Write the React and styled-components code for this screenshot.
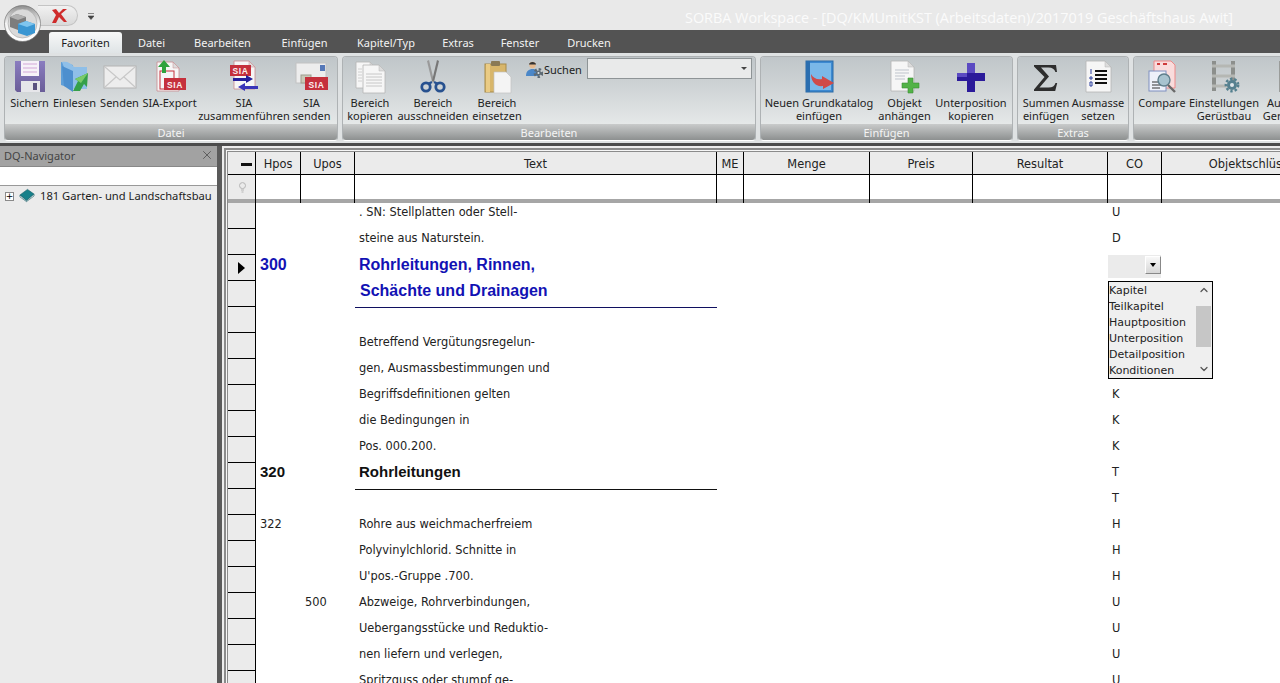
import React from 'react';
import styled, { createGlobalStyle } from 'styled-components';
import { ChevronUp, ChevronDown, X } from 'lucide-react';

const GRID_FONT = '"DejaVu Sans", Tahoma, sans-serif';
const RIBBON_FONT = '"Noto Sans", Tahoma, sans-serif';
const COLUMNS = '28px 45px 54px 362px 27px 126px 103px 135px 54px 184px';

const GlobalStyle = createGlobalStyle`
  html, body {
    margin: 0;
    height: 100%;
    overflow: hidden;
    background: #fff;
  }
  #root {
    height: 100%;
  }
`;

const Page = styled.div`
  position: relative;
  display: flex;
  flex-direction: column;
  height: 100%;
  overflow: hidden;
  font-family: ${RIBBON_FONT};
  font-size: 11px;
  color: #1c1c1c;
`;

/* title + tabs */
const TitleBar = styled.div`
  flex: none;
  display: flex;
  align-items: center;
  height: 30px;
  background: #e9e9e9;
`;

const QuickAccess = styled.div`
  display: flex;
  align-items: center;
  justify-content: flex-end;
  align-self: flex-start;
  box-sizing: border-box;
  width: 40px;
  height: 21px;
  margin: 5px 0 0 38px;
  padding-right: 9px;
  border: 1px solid #c4c4c4;
  border-left: 0;
  border-radius: 0 11px 11px 0;
  background: linear-gradient(#f1f1f1, #d9d9d9);
`;

const QuickMenu = styled.svg`
  flex: none;
  width: 6px;
  height: 7px;
  margin: 0 0 0 10px;
  position: relative;
  top: 1px;
`;

const TitleText = styled.div`
  margin: 4px 0 0 591px;
  color: #fbfbfb;
  font-family: "Open Sans", sans-serif;
  font-size: 14.4px;
  white-space: nowrap;
`;

const Orb = styled.div`
  position: absolute;
  left: 4px;
  top: 5px;
  width: 37px;
  height: 37px;
  z-index: 2;
`;

const TabBar = styled.div`
  flex: none;
  display: flex;
  align-items: flex-end;
  height: 23px;
  padding-left: 49px;
  background: #535353;
`;

const Tab = styled.div`
  display: flex;
  align-items: center;
  justify-content: center;
  box-sizing: border-box;
  width: ${(p) => p.$w}px;
  height: 21px;
  margin-right: ${(p) => p.$gap || 0}px;
  color: ${(p) => (p.$active ? '#1b1b1b' : '#f2f2f2')};
  background: ${(p) => (p.$active ? 'linear-gradient(#f7f8f8, #dfe4e6)' : 'none')};
  border-radius: 3px 3px 0 0;
  white-space: nowrap;
`;

/* ribbon */
const Ribbon = styled.div`
  flex: none;
  display: flex;
  gap: 4px;
  box-sizing: border-box;
  height: 90px;
  padding: 3px 0 2px 4px;
  background: #dfe2e3;
  overflow: hidden;
`;

const Group = styled.div`
  flex: none;
  display: flex;
  flex-direction: column;
  box-sizing: border-box;
  width: ${(p) => p.$w}px;
  border: 1px solid #aeb2b4;
  border-bottom-color: #fff;
  border-radius: 4px;
  overflow: hidden;
`;

const GroupBody = styled.div`
  flex: 1;
  display: flex;
  padding: 3px 0 0 3px;
  background: linear-gradient(#c0c6c9, #cdd2d4 40%, #e5e8e8);
`;

const GroupFooter = styled.div`
  flex: none;
  height: 16px;
  color: #f4f4f4;
  line-height: 18px;
  text-align: center;
  background: linear-gradient(#c9cbcb, #8d9090);
`;

const Item = styled.div`
  flex: none;
  display: flex;
  flex-direction: column;
  align-items: center;
  width: ${(p) => p.$w}px;
  white-space: nowrap;
  svg {
    display: block;
    width: 34px;
    height: 34px;
  }
`;

const ItemLabel = styled.div`
  margin-top: 2px;
  color: #222;
  line-height: 13px;
  text-align: center;
  white-space: pre;
`;

const SearchBox = styled.div`
  display: flex;
  align-items: flex-start;
  margin-left: 4px;
  svg {
    flex: none;
    width: 17px;
    height: 17px;
    margin-top: 1px;
  }
`;

const SearchLabel = styled.span`
  width: 43px;
  margin: 2px 0 0 1px;
`;

const Combo = styled.div`
  position: relative;
  box-sizing: border-box;
  width: 165px;
  height: 21px;
  margin-top: -2px;
  border: 1px solid #8e9496;
  background: #e9eaea;
  &::after {
    content: '';
    position: absolute;
    right: 4px;
    top: 8px;
    border: 3px solid transparent;
    border-top: 3px solid #444;
  }
`;

const DarkStrip = styled.div`
  flex: none;
  height: 3px;
  background: #4c4c4c;
`;

/* body */
const Workspace = styled.div`
  flex: 1;
  display: flex;
  min-height: 0;
`;

const Navigator = styled.div`
  flex: none;
  display: flex;
  flex-direction: column;
  width: 217px;
  background: #ebebeb;
`;

const NavHeader = styled.div`
  flex: none;
  display: flex;
  align-items: center;
  justify-content: space-between;
  box-sizing: border-box;
  height: 21px;
  padding: 0 3px 2px 4px;
  color: #444;
  background: #a2a2a2;
  border-bottom: 1px solid #888;
`;

const NavSearch = styled.div`
  flex: none;
  height: 18px;
  background: #fff;
  border-bottom: 1px solid #999;
`;

const TreeRow = styled.div`
  display: flex;
  align-items: center;
  height: 19px;
  padding-left: 5px;
  font-size: 11.2px;
  white-space: nowrap;
  svg {
    flex: none;
  }
`;

const Expander = styled.div`
  flex: none;
  display: flex;
  align-items: center;
  justify-content: center;
  box-sizing: border-box;
  width: 9px;
  height: 9px;
  margin: 2px 5px 0 0;
  border: 1px solid #8a8a8a;
  background: #fff;
  font-family: ${GRID_FONT};
  font-size: 9px;
  line-height: 1;
  color: #000;
`;

const TreeLabel = styled.span`
  margin-left: 5px;
  padding-bottom: 1px;
`;

const Splitter = styled.div`
  flex: none;
  width: 5px;
  background: #5a5a5a;
`;

const GridFrame = styled.div`
  flex: 1;
  min-width: 0;
  padding: 2px 0 0 2px;
  background: #ececec;
`;

const GridBorder = styled.div`
  box-sizing: border-box;
  height: 100%;
  padding: 1px 0 0 1px;
  border: solid #8b8b8b;
  border-width: 2px 0 0 2px;
  background: #f6f6f6;
`;

const GridClip = styled.div`
  position: relative;
  height: 100%;
  border: solid #8b8b8b;
  border-width: 1px 0 0 1px;
  background: #fff;
  overflow: hidden;
  font-family: ${GRID_FONT};
  font-size: 11.4px;
`;

const HeaderRow = styled.div`
  display: grid;
  grid-template-columns: ${COLUMNS};
  height: 23px;
  width: 1118px;
`;

const HeaderCell = styled.div`
  box-sizing: border-box;
  height: 23px;
  border-right: 1px solid #000;
  border-bottom: 1px solid #000;
  background: #ebebeb;
  color: #222;
  line-height: 24px;
  text-align: center;
  white-space: nowrap;
`;

const CornerMark = styled.div`
  width: 11px;
  height: 3px;
  margin: 11px 3px 0 auto;
  background: #111;
`;

const FilterRow = styled.div`
  display: grid;
  grid-template-columns: ${COLUMNS};
  height: 28px;
  width: 1118px;
`;

const FilterCell = styled.div`
  box-sizing: border-box;
  border-right: 1px solid #000;
  background: linear-gradient(
    ${(p) => (p.$corner ? '#ebebeb' : '#fff')} 24px,
    #a6a6a6 24px
  );
  svg {
    display: block;
    margin: 7px 0 0 10px;
  }
`;

const DataRow = styled.div`
  display: grid;
  grid-template-columns: ${COLUMNS};
  height: 26px;
  width: 1118px;
`;

const Selector = styled.div`
  display: flex;
  align-items: center;
  justify-content: center;
  box-sizing: border-box;
  height: 26px;
  padding-left: 1px;
  border-right: 1px solid #000;
  border-bottom: 1px solid #000;
  background: #ebebeb;
`;

const Arrow = styled.div`
  width: 0;
  height: 0;
  margin-right: 2px;
  border: 6px solid transparent;
  border-left: 7px solid #000;
  border-right: 0;
`;

const Cell = styled.div`
  box-sizing: border-box;
  padding: ${(p) => (p.$bold ? 1 : 0)}px 0 0 ${(p) => p.$pad || 4}px;
  color: ${(p) => p.$color || '#222'};
  font-family: ${(p) => (p.$bold ? '"Liberation Sans", Arial, sans-serif' : 'inherit')};
  font-size: ${(p) => p.$size || 11.4}px;
  font-weight: ${(p) => (p.$bold ? 700 : 400)};
  line-height: ${(p) => (p.$size === 15 ? 16 : 18)}px;
  white-space: nowrap;
`;

const TextCell = styled(Cell)`
  box-shadow: ${(p) => (p.$rule ? `0 1px 0 ${p.$rule}` : 'none')};
  height: 26px;
`;

const InlineCombo = styled.div`
  position: absolute;
  left: 880px;
  top: 103px;
  box-sizing: border-box;
  width: 53px;
  height: 23px;
  background: #ebebeb;
`;

const ComboButton = styled.div`
  position: absolute;
  right: 0;
  top: 1px;
  box-sizing: border-box;
  width: 16px;
  height: 18px;
  background: linear-gradient(#f8f8f8, #d6d6d6);
  border: 1px solid #fff;
  border-right-color: #888;
  border-bottom-color: #888;
  &::after {
    content: '';
    position: absolute;
    left: 4px;
    top: 6px;
    border: 3px solid transparent;
    border-top: 4px solid #000;
  }
`;

const ListBox = styled.div`
  position: absolute;
  left: 880px;
  top: 129px;
  display: flex;
  box-sizing: border-box;
  width: 105px;
  height: 98px;
  border: 1px solid #000;
  background: #efefef;
  font-size: 11px;
`;

const ListItems = styled.div`
  flex: 1;
  padding-top: 1px;
`;

const ListItem = styled.div`
  height: 16px;
  color: #222;
  line-height: 16px;
  white-space: nowrap;
`;

const ScrollBar = styled.div`
  flex: none;
  display: flex;
  flex-direction: column;
  align-items: center;
  justify-content: flex-start;
  width: 15px;
  margin-right: 1px;
  padding: 2px 0;
  box-sizing: border-box;
  color: #555;
  svg {
    flex: none;
  }
`;

const ScrollThumb = styled.div`
  flex: none;
  align-self: stretch;
  height: 41px;
  margin: 10px 0 16px;
  background: #c6c6c6;
`;

/* drawn icons */
function Gear({ x, y, r, color }) {
  return (
    <g>
      <circle cx={x} cy={y} r={r} fill={color} />
      <circle cx={x} cy={y} r={r + 1.2} fill="none" stroke={color} strokeWidth="2.4" strokeDasharray="2.4 2" />
      <circle cx={x} cy={y} r={r * 0.4} fill="#dfe6ea" />
    </g>
  );
}

function Sheet({ x = 6, y = 1, w = 20, h = 28, fill = '#f6f6f6', edge = '#b5b5b5' }) {
  return (
    <g>
      <path
        d={`M${x} ${y}h${w - 6}l6 6v${h - 6}h-${w}z`}
        fill={fill}
        stroke={edge}
        strokeWidth="0.8"
      />
      <path d={`M${x + w - 6} ${y}v6h6z`} fill="#dcdcdc" stroke={edge} strokeWidth="0.5" />
    </g>
  );
}

function SiaTag({ x, y, w = 20, h = 11 }) {
  return (
    <g>
      <rect x={x} y={y} width={w} height={h} fill="#c5303c" />
      <text
        x={x + w / 2}
        y={y + h - 2.2}
        textAnchor="middle"
        fontFamily="Liberation Sans, sans-serif"
        fontWeight="700"
        fontSize="8.5"
        letterSpacing="0.6"
        fill="#fbeeee"
      >
        SIA
      </text>
    </g>
  );
}

const icons = {
  save: (
    <svg viewBox="0 0 34 34">
      <defs>
        <linearGradient id="fl" x1="0" y1="0" x2="0" y2="1">
          <stop offset="0" stopColor="#8a7dc0" />
          <stop offset="1" stopColor="#6a5d98" />
        </linearGradient>
      </defs>
      <path d="M2 1h30v31H4l-2-2z" fill="url(#fl)" />
      <rect x="8" y="1" width="18" height="15" fill="#f6f2f8" />
      <path d="M10 4h14M10 8h14M10 12h14" stroke="#d3a8d8" strokeWidth="1" />
      <rect x="8" y="21" width="19" height="11" fill="#e6e6ea" />
      <rect x="20" y="23" width="4" height="7" fill="#5a5280" />
    </svg>
  ),
  load: (
    <svg viewBox="0 0 34 34">
      <path d="M3 2l12 3v24l-12-4z" fill="#5f9fd8" />
      <path d="M4 2c5-1 9 1 12 5h13v22H14z" fill="#8fbfe8" />
      <path d="M4 6l11 5v21L6 26z" fill="#4d8fce" />
      <path d="M15 31l5-10-3-2 13-6-1 14-3-3-4 7z" fill="#35a04a" />
      <path d="M20 21l-3-2 13-6-7 10z" fill="#7acb6a" />
    </svg>
  ),
  mail: (
    <svg viewBox="0 0 34 34">
      <rect x="1" y="6" width="32" height="22" fill="#ededed" stroke="#b3b3b3" />
      <path d="M2 7l15 13L32 7M2 27l11-10M32 27L21 17" fill="none" stroke="#c8c8c8" strokeWidth="1.2" />
    </svg>
  ),
  export: (
    <svg viewBox="0 0 34 34">
      <Sheet x={4} y={2} w={22} h={29} edge="#c98a8f" />
      <rect x="7" y="11" width="14" height="18" fill="none" stroke="#c5303c" strokeWidth="1" />
      <SiaTag x={11} y={18} w={22} h={12} />
      <path d="M9 13V7H5l6-7 6 7h-4v6z" fill="#2fa33d" />
    </svg>
  ),
  merge: (
    <svg viewBox="0 0 34 34">
      <Sheet x={7} y={1} w={21} h={28} edge="#c98a8f" />
      <SiaTag x={3} y={5} w={21} h={11} />
      <path d="M6 18h13v-3l7 4-7 4v-2H6z" fill="#26209a" />
      <path d="M31 26H18v-3l-7 4 7 4v-2h13z" fill="#3a34b8" />
    </svg>
  ),
  siaSend: (
    <svg viewBox="0 0 34 34">
      <rect x="1" y="3" width="30" height="20" fill="#ededed" stroke="#c2c2c2" />
      <rect x="25" y="5" width="5" height="6" fill="#5578b8" />
      <rect x="6" y="15" width="10" height="8" fill="#c9c9b8" stroke="#9d9d90" />
      <SiaTag x={10} y={17} w={23} h={13} />
    </svg>
  ),
  copy: (
    <svg viewBox="0 0 34 34">
      <Sheet x={3} y={2} w={20} h={26} />
      <Sheet x={10} y={5} w={22} h={28} />
      <path d="M13 14h16M13 17h16M13 20h16M13 23h16M13 26h16" stroke="#bdbdbd" strokeWidth="0.8" />
      <path d="M5 9h4M5 12h4M5 15h4M5 18h4M5 21h4" stroke="#c7c7c7" strokeWidth="0.8" />
    </svg>
  ),
  cut: (
    <svg viewBox="0 0 34 34">
      <path d="M13 0l5 21-2 1-5-21z" fill="#9a9a9a" />
      <path d="M21 0l-5 21 2 1 5-21z" fill="#777" />
      <circle cx="10" cy="27" r="4.2" fill="none" stroke="#27518f" strokeWidth="2.8" />
      <circle cx="24" cy="27" r="4.2" fill="none" stroke="#27518f" strokeWidth="2.8" />
      <path d="M16 22l-4 2M18 22l4 2" stroke="#27518f" strokeWidth="2.4" />
    </svg>
  ),
  paste: (
    <svg viewBox="0 0 34 34">
      <rect x="5" y="4" width="21" height="28" fill="#d8b66a" stroke="#a88b4b" />
      <rect x="6" y="4" width="4" height="28" fill="#eacb84" />
      <rect x="11" y="1" width="9" height="5" rx="1" fill="#8a7a55" />
      <path d="M14 12h12l5 5v16H14z" fill="#f4f4f4" stroke="#c2c2c2" strokeWidth="0.7" />
    </svg>
  ),
  user: (
    <svg viewBox="0 0 17 17">
      <circle cx="6.5" cy="4" r="3.2" fill="#e6b98d" />
      <path d="M3 3.5C3 0 10 0 10 3.5z" fill="#333" />
      <path d="M0 15c0-5 3-7 6.5-7S13 10 13 15z" fill="#4b87c8" />
      <Gear x={12.5} y={12} r={2.6} color="#5d6a74" />
    </svg>
  ),
  catalog: (
    <svg viewBox="0 0 34 34">
      <rect x="4" y="1" width="27" height="31" fill="#3d8ad2" stroke="#2b6aa6" />
      <rect x="4" y="1" width="4" height="31" fill="#2a6eb0" />
      <rect x="8" y="3" width="21" height="27" fill="#7ab8e8" />
      <path d="M9 14c2 4 6 6 11 5v-3l12 7-11 6v-3c-7 1-12-4-12-12z" fill="#cf4a48" />
    </svg>
  ),
  attach: (
    <svg viewBox="0 0 34 34">
      <Sheet x={3} y={1} w={23} h={30} />
      <path d="M7 10h14M7 13h14M7 16h10M7 19h10" stroke="#bfc4cc" strokeWidth="1" />
      <path d="M20 18h5v5h6v5h-6v5h-5v-5h-6v-5h6z" fill="#52b347" stroke="#3d8d35" strokeWidth="0.6" />
    </svg>
  ),
  plus: (
    <svg viewBox="0 0 34 34">
      <path d="M13 3h8v10h10v8H21v11h-8V21H3v-8h10z" fill="#2b1a9a" />
      <path d="M13 3h8v10h-8zM3 13h10v4H3z" fill="#5b4ac2" />
    </svg>
  ),
  sigma: (
    <svg viewBox="0 0 34 34">
      <path
        d="M5 5h22l1 7h-1.600c-1-3-3-4.500-7-4.500h-7.400l8 9-9.500 11h9c4 0 6-1.500 7-4.500h1.700l-2 8H5v-1.500l10.500-12.500L5 6.500z"
        fill="#2e2e2e"
      />
    </svg>
  ),
  list: (
    <svg viewBox="0 0 34 34">
      <Sheet x={5} y={1} w={25} h={31} />
      <path d="M14 11h12M14 15h12M14 19h12M14 23h12" stroke="#111" strokeWidth="2" />
      <path d="M10 9v5M9 17h2v2H9zM9 22h2v4H9z" stroke="#2a3f9e" strokeWidth="1" fill="none" />
    </svg>
  ),
  compare: (
    <svg viewBox="0 0 34 34">
      <path d="M9 1h17l4 4v23H9z" fill="#f9dcdc" stroke="#ee8a8a" />
      <path d="M12 4h3M18 4h4" stroke="#cf3a3a" strokeWidth="2" />
      <rect x="4" y="11" width="17" height="20" fill="#eef1fa" stroke="#7f8fc0" />
      <path d="M7 22h11M7 25h11M7 28h8" stroke="#333" strokeWidth="1" />
      <circle cx="19" cy="20" r="6" fill="#a8c3cf" stroke="#5f7f8c" strokeWidth="1.4" />
      <path d="M23 25l7 7" stroke="#6a6a6a" strokeWidth="2.4" />
    </svg>
  ),
  scaffold: (
    <svg viewBox="0 0 34 34">
      <rect x="5" y="1" width="4" height="30" fill="#8c8f8c" />
      <rect x="24" y="1" width="4" height="24" fill="#8c8f8c" />
      <path d="M5 6h23M5 16h23M5 26h16" stroke="#b5b7b3" strokeWidth="3" />
      <Gear x={25} y={25} r={5} color="#55808f" />
    </svg>
  ),
  blank: (
    <svg viewBox="0 0 34 34">
      <rect x="6" y="1" width="5" height="31" fill="#9a9c9a" />
      <rect x="14" y="6" width="20" height="20" fill="#c7c9c7" />
    </svg>
  ),
};

function OrbIcon() {
  return (
    <svg viewBox="0 0 37 37" width="37" height="37">
      <defs>
        <linearGradient id="ring" x1="0" y1="0" x2="0" y2="1">
          <stop offset="0" stopColor="#8f8f8f" />
          <stop offset="0.5" stopColor="#f4f4f4" />
          <stop offset="1" stopColor="#ffffff" />
        </linearGradient>
      </defs>
      <circle cx="18.5" cy="18.5" r="18" fill="url(#ring)" stroke="#666" strokeWidth="0.6" />
      <circle cx="18.500" cy="18.500" r="14.500" fill="#dadada" stroke="#a5a5a5" strokeWidth="0.6" />
      <path d="M6 12l7-3 9 3v10l-8 3-8-3z" fill="#7d7d7d" />
      <path d="M6 12l7-3 9 3-8 3z" fill="#b1b1b1" />
      <path d="M14 19l8-3 9 3v9l-8 3-9-3z" fill="#3a96d2" />
      <path d="M14 19l8-3 9 3-8 3z" fill="#7fc5ee" />
    </svg>
  );
}

function CloseMark() {
  return (
    <svg viewBox="0 0 18 16" width="18" height="16">
      <path d="M2 2l4 5-4 8h4l3-6 5 5h3l-6-8 6-5h-4l-4 4-3-4z" fill="#cf2b2b" />
    </svg>
  );
}

function BookIcon() {
  return (
    <svg viewBox="0 0 17 15" width="16" height="15">
      <path d="M1 7l8-6 7 5-8 7z" fill="#17808a" stroke="#0d5560" strokeWidth="0.6" />
      <path d="M1 7v2l7 5 8-6V6l-8 7z" fill="#e6eeee" stroke="#0d5560" strokeWidth="0.6" />
    </svg>
  );
}

function BulbIcon() {
  return (
    <svg viewBox="0 0 9 11" width="9" height="11">
      <circle cx="4.5" cy="3.6" r="3" fill="none" stroke="#b5b5b5" />
      <path d="M3 8h3M3.5 10h2" stroke="#b5b5b5" />
    </svg>
  );
}

const TABS = [
  ['Favoriten', 73, 2, true],
  ['Datei', 55, 0],
  ['Bearbeiten', 87, 0],
  ['Einfügen', 77, 0],
  ['Kapitel/Typ', 86, 0],
  ['Extras', 58, 0],
  ['Fenster', 66, 0],
  ['Drucken', 72, 0],
];

const GROUPS = [
  {
    title: 'Datei',
    w: 334,
    items: [
      ['save', 'Sichern', 43],
      ['load', 'Einlesen', 47],
      ['mail', 'Senden', 43],
      ['export', 'SIA-Export', 57],
      ['merge', 'SIA\nzusammenführen', 92],
      ['siaSend', 'SIA\nsenden', 43],
    ],
  },
  {
    title: 'Bearbeiten',
    w: 414,
    search: true,
    items: [
      ['copy', 'Bereich\nkopieren', 48],
      ['cut', 'Bereich\nausschneiden', 78],
      ['paste', 'Bereich\neinsetzen', 50],
    ],
  },
  {
    title: 'Einfügen',
    w: 253,
    items: [
      ['catalog', 'Neuen Grundkatalog\neinfügen', 110],
      ['attach', 'Objekt\nanhängen', 61],
      ['plus', 'Unterposition\nkopieren', 72],
    ],
  },
  {
    title: 'Extras',
    w: 112,
    items: [
      ['sigma', 'Summen\neinfügen', 50],
      ['list', 'Ausmasse\nsetzen', 54],
    ],
  },
  {
    title: '',
    w: 300,
    items: [
      ['compare', 'Compare', 50],
      ['scaffold', 'Einstellungen\nGerüstbau', 74],
      ['blank', 'Ausmass\nGerüstbau', 58],
    ],
  },
];

const HEADERS = ['Hpos', 'Upos', 'Text', 'ME', 'Menge', 'Preis', 'Resultat', 'CO', 'Objektschlüssel'];

const BLUE = '#1212b4';

const ROWS = [
  { text: '. SN: Stellplatten oder Stell-', co: 'U' },
  { text: 'steine aus Naturstein.', co: 'D' },
  { hpos: '300', text: 'Rohrleitungen, Rinnen,', color: BLUE, size: 16, bold: true, current: true },
  { text: 'Schächte und Drainagen', color: BLUE, size: 16, bold: true, rule: '#101060', nudge: 5 },
  {},
  { text: 'Betreffend Vergütungsregelun-' },
  { text: 'gen, Ausmassbestimmungen und' },
  { text: 'Begriffsdefinitionen gelten', co: 'K' },
  { text: 'die Bedingungen in', co: 'K' },
  { text: 'Pos. 000.200.', co: 'K' },
  { hpos: '320', text: 'Rohrleitungen', color: '#111', size: 15, bold: true, rule: '#111', co: 'T' },
  { co: 'T' },
  { hpos: '322', text: 'Rohre aus weichmacherfreiem', co: 'H' },
  { text: 'Polyvinylchlorid. Schnitte in', co: 'H' },
  { text: "U'pos.-Gruppe .700.", co: 'H' },
  { upos: '500', text: 'Abzweige, Rohrverbindungen,', co: 'U' },
  { text: 'Uebergangsstücke und Reduktio-', co: 'U' },
  { text: 'nen liefern und verlegen,', co: 'U' },
  { text: 'Spritzguss oder stumpf ge-', co: 'U' },
];

const CO_OPTIONS = ['Kapitel', 'Teilkapitel', 'Hauptposition', 'Unterposition', 'Detailposition', 'Konditionen'];

function RibbonGroup({ group }) {
  return (
    <Group $w={group.w}>
      <GroupBody>
        {group.items.map(([icon, label, w]) => (
          <Item key={label} $w={w}>
            {icons[icon]}
            <ItemLabel>{label}</ItemLabel>
          </Item>
        ))}
        {group.search && (
          <SearchBox>
            {icons.user}
            <SearchLabel>Suchen</SearchLabel>
            <Combo />
          </SearchBox>
        )}
      </GroupBody>
      <GroupFooter>{group.title}</GroupFooter>
    </Group>
  );
}

function Row({ row }) {
  return (
    <DataRow>
      <Selector>{row.current && <Arrow />}</Selector>
      <Cell $color={row.color} $size={row.size} $bold={row.bold}>
        {row.hpos}
      </Cell>
      <Cell>{row.upos}</Cell>
      <TextCell
        $color={row.color}
        $size={row.size}
        $bold={row.bold}
        $rule={row.rule}
        $pad={row.nudge || 4}
      >
        {row.text}
      </TextCell>
      <div />
      <div />
      <div />
      <div />
      <Cell>{row.co}</Cell>
      <div />
    </DataRow>
  );
}

export default function App() {
  return (
    <Page>
      <GlobalStyle />
      <TitleBar>
        <QuickAccess>
          <CloseMark />
        </QuickAccess>
        <QuickMenu viewBox="0 0 6 7">
          <path d="M0 0.500h6M0 3h6l-3 3.500z" fill="#444" stroke="#444" strokeWidth="0.6" />
        </QuickMenu>
        <TitleText>SORBA Workspace - [DQ/KMUmitKST (Arbeitsdaten)/2017019 Geschäftshaus Awit]</TitleText>
      </TitleBar>
      <Orb>
        <OrbIcon />
      </Orb>
      <TabBar>
        {TABS.map(([label, w, gap, active]) => (
          <Tab key={label} $w={w} $gap={gap} $active={active}>
            {label}
          </Tab>
        ))}
      </TabBar>
      <Ribbon>
        {GROUPS.map((group) => (
          <RibbonGroup key={group.w} group={group} />
        ))}
      </Ribbon>
      <DarkStrip />
      <Workspace>
        <Navigator>
          <NavHeader>
            DQ-Navigator
            <X size={14} color="#555" strokeWidth={1.5} />
          </NavHeader>
          <NavSearch />
          <TreeRow>
            <Expander>+</Expander>
            <BookIcon />
            <TreeLabel>181 Garten- und Landschaftsbau</TreeLabel>
          </TreeRow>
        </Navigator>
        <Splitter />
        <GridFrame>
          <GridBorder>
            <GridClip>
              <HeaderRow>
                <HeaderCell>
                  <CornerMark />
                </HeaderCell>
                {HEADERS.map((h) => (
                  <HeaderCell key={h}>{h}</HeaderCell>
                ))}
              </HeaderRow>
              <FilterRow>
                <FilterCell $corner>
                  <BulbIcon />
                </FilterCell>
                {HEADERS.map((h) => (
                  <FilterCell key={h} />
                ))}
              </FilterRow>
              {ROWS.map((row, i) => (
                <Row key={i} row={row} />
              ))}
              <InlineCombo>
                <ComboButton />
              </InlineCombo>
              <ListBox>
                <ListItems>
                  {CO_OPTIONS.map((o) => (
                    <ListItem key={o}>{o}</ListItem>
                  ))}
                </ListItems>
                <ScrollBar>
                  <ChevronUp size={12} strokeWidth={2.5} />
                  <ScrollThumb />
                  <ChevronDown size={12} strokeWidth={2.5} />
                </ScrollBar>
              </ListBox>
            </GridClip>
          </GridBorder>
        </GridFrame>
      </Workspace>
    </Page>
  );
}
